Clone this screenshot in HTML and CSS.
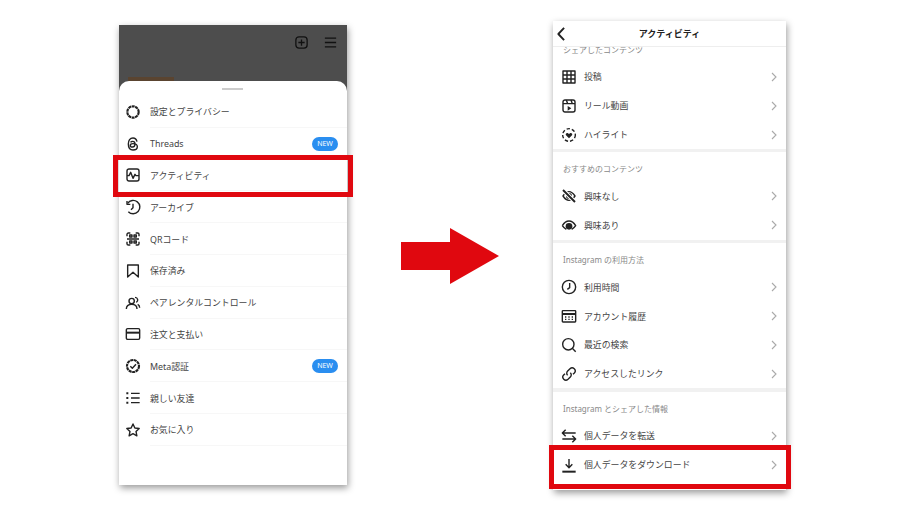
FILE: index.html
```html
<!doctype html>
<html>
<head>
<meta charset="utf-8">
<title>アクティビティ</title>
<link rel="stylesheet" href="styles.css">
</head>
<body>
<div class="page">

  <div class="phone phone-left">
    <div class="dim">
      <div class="dim-icons">
        <svg class="ic ic-top" viewBox="0 0 24 24"><rect x="3" y="3" width="18" height="18" rx="5"/><path d="M12 7v10M7 12h10"/></svg>
        <svg class="ic ic-top" viewBox="0 0 24 24"><path d="M3 5h18M3 12h18M3 19h18"/></svg>
      </div>
      <div class="dim-thumb"></div>
    </div>
    <div class="sheet">
      <div class="grabber"></div>
      <div class="menu-row">
        <svg class="ic" viewBox="0 0 24 24"><circle class="knurl" cx="12" cy="12" r="8.500"/></svg>
        <span class="menu-text">設定とプライバシー</span>
      </div>
      <div class="menu-row">
        <svg class="ic" viewBox="0 0 24 24"><path d="M18 8.500C17 4.500 14.500 3 12 3 7.500 3 5 6.500 5 12s2.500 9 7 9c4 0 6.500-2 6.500-4.800 0-3.200-3-4.700-6.500-4.700-2.500 0-4 1-4 2.600s1.500 2.400 3.200 2.400c2.300 0 3.800-1.600 3.800-4.500 0-2.500-1.300-4-3.500-4-1.500 0-2.500.6-3.200 1.700"/></svg>
        <span class="menu-text">Threads</span>
        <span class="badge">NEW</span>
      </div>
      <div class="menu-row">
        <svg class="ic" viewBox="0 0 24 24"><rect x="3" y="3" width="18" height="18" rx="3"/><path d="M3 13h3l2.500-5 3.500 9 3-6 1.500 2H21"/></svg>
        <span class="menu-text">アクティビティ</span>
      </div>
      <div class="menu-row">
        <svg class="ic" viewBox="0 0 24 24"><path d="M4 6.500A10 10 0 1 1 5 19"/><path d="M3 3v5h5M12 7v6l-3 3"/></svg>
        <span class="menu-text">アーカイブ</span>
      </div>
      <div class="menu-row">
        <svg class="ic" viewBox="0 0 24 24"><path d="M3 8V5a2 2 0 0 1 2-2h3M16 3h3a2 2 0 0 1 2 2v3M3 16v3a2 2 0 0 0 2 2h3M16 21h3a2 2 0 0 0 2-2v-3M3 12h18"/><rect x="7" y="6" width="3.500" height="3"/><rect x="13.500" y="6" width="3.500" height="3"/><rect x="7" y="15" width="3.500" height="3"/><rect x="13.500" y="15" width="3.500" height="3"/></svg>
        <span class="menu-text">QRコード</span>
      </div>
      <div class="menu-row">
        <svg class="ic" viewBox="0 0 24 24"><path d="M4 3h16v18l-8-7-8 7z"/></svg>
        <span class="menu-text">保存済み</span>
      </div>
      <div class="menu-row">
        <svg class="ic" viewBox="0 0 24 24"><circle cx="10" cy="9" r="4"/><path d="M2 21c0-4.500 3.500-7 8-7s8 2.500 8 7"/><path d="M15 3.500a4 4 0 0 1 2 7.500M19 14c2 1 3 3 3 5"/></svg>
        <span class="menu-text">ペアレンタルコントロール</span>
      </div>
      <div class="menu-row">
        <svg class="ic" viewBox="0 0 24 24"><rect x="2" y="4" width="20" height="16" rx="2"/><path class="thick" d="M2 10h20"/></svg>
        <span class="menu-text">注文と支払い</span>
      </div>
      <div class="menu-row">
        <svg class="ic" viewBox="0 0 24 24"><circle class="knurl" cx="12" cy="12" r="9"/><path d="M8 12.500l3 3 5.500-6"/></svg>
        <span class="menu-text">Meta認証</span>
        <span class="badge">NEW</span>
      </div>
      <div class="menu-row">
        <svg class="ic" viewBox="0 0 24 24"><path d="M9 5h13M9 12h13M9 19h13"/><path class="thick" d="M2 5h3M2 12h3M2 19h3"/></svg>
        <span class="menu-text">親しい友達</span>
      </div>
      <div class="menu-row">
        <svg class="ic" viewBox="0 0 24 24"><path d="M12 3l2.800 6 6.500.8-4.800 4.400 1.300 6.500L12 17.500l-5.800 3.200 1.300-6.500-4.800-4.400 6.500-.8z"/></svg>
        <span class="menu-text">お気に入り</span>
      </div>
    </div>
    <div class="mark mark-left"></div>
  </div>

  <svg class="arrow" viewBox="0 0 98 56"><path d="M0 14h49V0l49 28-49 28V42H0z"/></svg>

  <div class="phone phone-right">
    <div class="head">
      <svg class="ic back" viewBox="0 0 12 18"><path d="M9.500 2L3 9l6.500 7"/></svg>
      <span class="head-title">アクティビティ</span>
    </div>

    <div class="label label-first">シェアしたコンテンツ</div>
    <div class="row">
      <svg class="ic" viewBox="0 0 24 24"><rect x="3" y="3" width="18" height="18"/><path d="M9 3v18M15 3v18M3 9h18M3 15h18"/></svg>
      <span class="row-text">投稿</span>
      <svg class="chev" viewBox="0 0 6 10"><path d="M1 1l4 4-4 4"/></svg>
    </div>
    <div class="row">
      <svg class="ic" viewBox="0 0 24 24"><rect x="3" y="3" width="18" height="18" rx="3"/><path d="M3 8.500h18M8 3l2 5.500M15 3l2 5.500"/><path class="solid" d="M10 12l5.500 3.500L10 19z"/></svg>
      <span class="row-text">リール動画</span>
      <svg class="chev" viewBox="0 0 6 10"><path d="M1 1l4 4-4 4"/></svg>
    </div>
    <div class="row">
      <svg class="ic" viewBox="0 0 24 24"><circle class="dash" cx="12" cy="12" r="9.500"/><path class="solid" d="M12 17l-4.500-4.500c-1.500-2 1-4.500 3-3.200L12 10.500l1.500-1.200c2-1.300 4.500 1.200 3 3.200z"/></svg>
      <span class="row-text">ハイライト</span>
      <svg class="chev" viewBox="0 0 6 10"><path d="M1 1l4 4-4 4"/></svg>
    </div>
    <div class="bar"></div>

    <div class="label">おすすめのコンテンツ</div>
    <div class="row">
      <svg class="ic" viewBox="0 0 24 24"><path d="M3 12c3-4.500 6-6.500 9-6.500s6 2 9 6.500c-3 4.500-6 6.500-9 6.500S6 16.500 3 12z"/><circle class="solid" cx="12" cy="12" r="4.500"/><path class="cut" d="M3 3l18 18"/><path class="thick" d="M3 3l18 18"/></svg>
      <span class="row-text">興味なし</span>
      <svg class="chev" viewBox="0 0 6 10"><path d="M1 1l4 4-4 4"/></svg>
    </div>
    <div class="row">
      <svg class="ic" viewBox="0 0 24 24"><path d="M2 13c3-5 6.500-7 10-7s7 2 10 7c-2 3-4 4.500-6 5.500"/><path d="M2 13c2 3 4 4.500 6 5.500"/><circle class="solid" cx="12" cy="14" r="5"/></svg>
      <span class="row-text">興味あり</span>
      <svg class="chev" viewBox="0 0 6 10"><path d="M1 1l4 4-4 4"/></svg>
    </div>
    <div class="bar"></div>

    <div class="label">Instagram の利用方法</div>
    <div class="row">
      <svg class="ic" viewBox="0 0 24 24"><circle cx="12" cy="12" r="10"/><path d="M13 6v7l-3.500 2.500"/></svg>
      <span class="row-text">利用時間</span>
      <svg class="chev" viewBox="0 0 6 10"><path d="M1 1l4 4-4 4"/></svg>
    </div>
    <div class="row">
      <svg class="ic" viewBox="0 0 24 24"><rect x="2" y="4" width="20" height="17" rx="1"/><path class="thick" d="M2 9h20"/><path d="M6 13.500h2M11 13.500h2M16 13.500h2M6 17h2M11 17h2M16 17h2"/></svg>
      <span class="row-text">アカウント履歴</span>
      <svg class="chev" viewBox="0 0 6 10"><path d="M1 1l4 4-4 4"/></svg>
    </div>
    <div class="row">
      <svg class="ic" viewBox="0 0 24 24"><circle cx="11" cy="11" r="8.500"/><path d="M17 17l5 5"/></svg>
      <span class="row-text">最近の検索</span>
      <svg class="chev" viewBox="0 0 6 10"><path d="M1 1l4 4-4 4"/></svg>
    </div>
    <div class="row">
      <svg class="ic" viewBox="0 0 24 24"><path d="M10 14a4.500 4.500 0 0 1 0-6.500l3.500-3.500a4.600 4.600 0 0 1 6.500 6.500L18 12.500"/><path d="M14 10a4.500 4.500 0 0 1 0 6.500L10.500 20A4.600 4.600 0 0 1 4 13.500L6 11.500"/></svg>
      <span class="row-text">アクセスしたリンク</span>
      <svg class="chev" viewBox="0 0 6 10"><path d="M1 1l4 4-4 4"/></svg>
    </div>
    <div class="bar"></div>

    <div class="label">Instagram とシェアした情報</div>
    <div class="row">
      <svg class="ic" viewBox="0 0 24 24"><path d="M2 8h20M7 3L2 8l5 5M2 17h20M17 12l5 5-5 5" transform="translate(0 -.5)"/></svg>
      <span class="row-text">個人データを転送</span>
      <svg class="chev" viewBox="0 0 6 10"><path d="M1 1l4 4-4 4"/></svg>
    </div>
    <div class="row">
      <svg class="ic" viewBox="0 0 24 24"><path d="M12 3v12M7 11l5 5 5-5"/><path class="thick" d="M2 22h20"/></svg>
      <span class="row-text">個人データをダウンロード</span>
      <svg class="chev" viewBox="0 0 6 10"><path d="M1 1l4 4-4 4"/></svg>
    </div>
    <div class="mark mark-right"></div>
  </div>

</div>
</body>
</html>
```

FILE: styles.css
```css
body{
	margin:0;
	background:#fff;
	font-family:"Noto Sans","Noto Sans CJK JP",sans-serif;
	color:#444;
}
.page{
	width:900px;
	height:512px;
	padding-left:119px;
	box-sizing:border-box;
	display:flex;
	align-items:center;
	gap:54px;
}
.phone{
	position:relative;
	flex:none;
	background:#fff;
	box-shadow:1px 3px 7px rgba(0,0,0,.4);
}
.phone-left{
	width:228px;
	height:460px;
	margin-top:-2px;
}
.phone-right{
	width:233px;
	height:469px;
	margin-top:-1px;
}

/* left phone */
.dim{
	height:66px;
	background:#4d4d4d;
	position:relative;
}
.dim-icons{
	display:flex;
	justify-content:flex-end;
	gap:14px;
	padding:10px 9px 0 0;
}
.dim-thumb{
	position:absolute;
	left:9px;
	bottom:10px;
	width:46px;
	height:4px;
	background:#5a4430;
}
.sheet{
	position:relative;
	margin-top:-10px;
	height:404px;
	box-sizing:border-box;
	background:#fff;
	border-radius:10px 10px 0 0;
	padding-top:15px;
}
.grabber{
	position:absolute;
	top:7px;
	left:103px;
	width:21px;
	height:2px;
	background:#ccc;
}
.menu-row{
	height:31.8px;
	box-sizing:border-box;
	display:flex;
	align-items:center;
	padding:0 9px 0 6px;
	position:relative;
}
.menu-row::after{
	content:"";
	position:absolute;
	left:31px;
	right:0;
	bottom:0;
	height:1px;
	background:#f7f7f7;
}
.menu-text{
	margin-left:9px;
	font-size:8.9px;
	flex:1;
}
.badge{
	width:26px;
	height:14px;
	border-radius:7px;
	background:#2a8ef0;
	color:#fff;
	font-size:7px;
	line-height:14px;
	text-align:center;
}

/* right phone */
.head{
	position:relative;
	z-index:1;
	height:26px;
	background:#fff;
	border-bottom:1px solid #eee;
	box-sizing:border-box;
	display:flex;
	align-items:center;
	justify-content:center;
}
.head-title{
	font-size:9px;
	font-weight:bold;
	color:#222;
}
.back{
	position:absolute;
	left:0;
	top:5px;
	width:12px;
	height:16px;
	stroke-width:2.4;
}
.label{
	height:29.5px;
	box-sizing:border-box;
	padding:11px 0 0 10px;
	font-size:8px;
	line-height:12px;
	color:#888;
}
.label-first{
	margin-top:-14.2px;
}
.row{
	height:28.9px;
	display:flex;
	align-items:center;
	padding:0 9px 0 8px;
}
.row-text{
	margin-left:7px;
	font-size:8.9px;
	flex:1;
}
.bar{
	height:3.5px;
	background:#f1f1f1;
}

/* icons */
.ic{
	flex:none;
	width:16px;
	height:16px;
	fill:none;
	stroke:#222;
	stroke-width:2.1;
	stroke-linejoin:round;
}
.ic-top{
	stroke:#111;
	width:15px;
	height:15px;
}
.ic .thick{
	stroke-width:3;
}
.ic .cut{
	stroke:#fff;
	stroke-width:6;
}
.ic .solid{
	fill:#222;
	stroke:none;
}
.ic .dash{
	stroke-dasharray:5 3;
}
.ic .knurl{
	stroke-width:3.2;
	stroke-dasharray:4.500 .8;
}
.chev{
	flex:none;
	width:6px;
	height:10px;
	fill:none;
	stroke:#aaa;
	stroke-width:1.1;
}

/* red call-outs */
.arrow{
	flex:none;
	width:98px;
	height:56px;
	fill:#e0080f;
}
.mark{
	position:absolute;
	box-sizing:border-box;
	border:5px solid #e0080f;
}
.mark-left{
	left:-6px;
	top:130px;
	width:240px;
	height:42px;
}
.mark-right{
	left:-4px;
	top:424px;
	width:242px;
	height:44px;
}
```
